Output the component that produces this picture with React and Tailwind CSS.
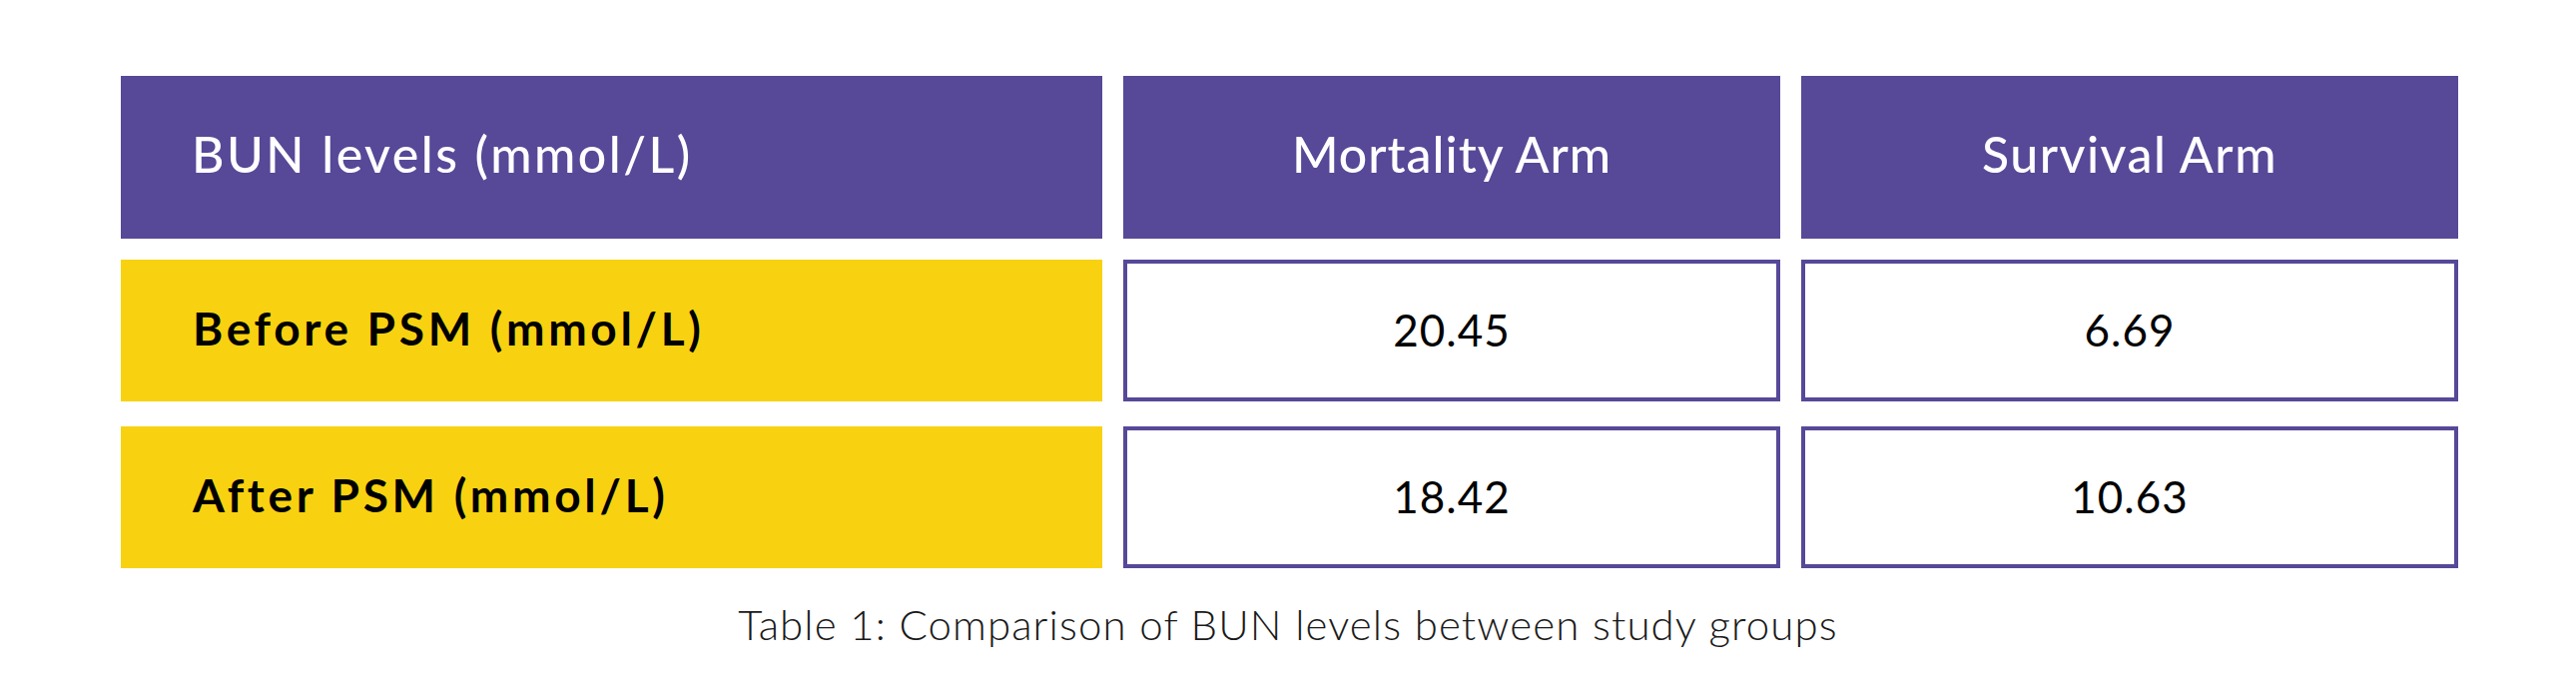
import React from 'react';

const rows = [
  { label: 'Before PSM (mmol/L)', mortality: '20.45', survival: '6.69' },
  { label: 'After PSM (mmol/L)', mortality: '18.42', survival: '10.63' },
];

const App = () => {
  return (
    <div className="w-[2580px] h-[697px] bg-white font-['Lato','Open_Sans',sans-serif]">
      <div className="pl-[121px] pt-[76px]">
        {/* header */}
        <div className="grid grid-cols-[983px_658px_658px] gap-x-[21px] text-white text-[50px] font-medium">
          <div className="h-[163px] bg-[#574898] flex items-center pl-[71px] pb-[6px] tracking-[2.5px]">
            BUN levels (mmol/L)
          </div>
          <div className="h-[163px] bg-[#574898] flex items-center justify-center pb-[6px] tracking-[1px]">
            Mortality Arm
          </div>
          <div className="h-[163px] bg-[#574898] flex items-center justify-center pb-[6px] tracking-[1.5px]">
            Survival Arm
          </div>
        </div>
        {/* body */}
        <div className="mt-[21px] flex flex-col gap-[25px]">
          {rows.map((row) => (
            <div key={row.label} className="grid grid-cols-[983px_658px_658px] gap-x-[21px]">
              <div className="h-[142px] bg-[#F8D210] flex items-center pl-[72px] pb-[5px] text-black text-[46px] font-bold tracking-[3.7px]">
                {row.label}
              </div>
              <div className="h-[142px] border-4 border-[#574898] bg-white flex items-center justify-center pb-[3px] text-black text-[44px] tracking-[1px]">
                {row.mortality}
              </div>
              <div className="h-[142px] border-4 border-[#574898] bg-white flex items-center justify-center pb-[3px] text-black text-[44px] tracking-[1px]">
                {row.survival}
              </div>
            </div>
          ))}
        </div>
      </div>
      <p className="mt-[35px] text-center text-[42px] font-light text-[#1a1a1a] leading-none tracking-[1.1px]">
        Table 1: Comparison of BUN levels between study groups
      </p>
    </div>
  );
};

export default App;
